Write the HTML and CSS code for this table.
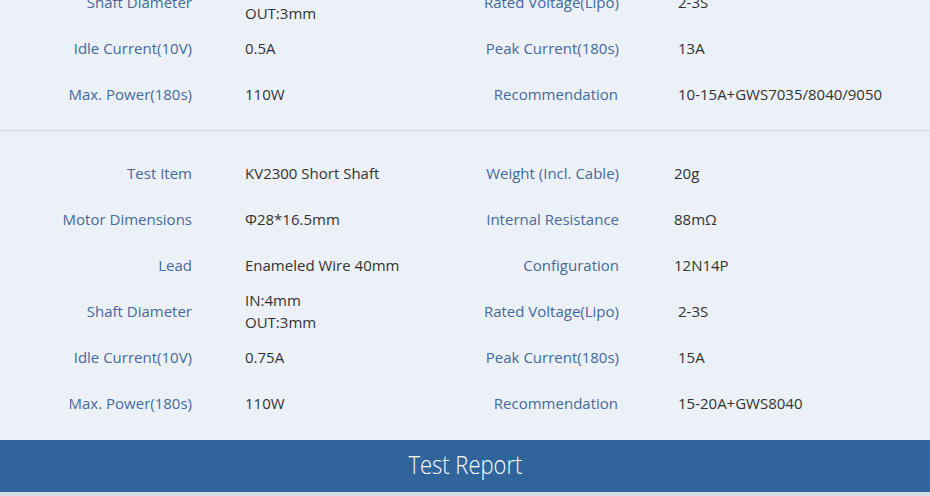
FILE: index.html
```html
<!DOCTYPE html>
<html>
<head>
<meta charset="utf-8">
<link rel="stylesheet" href="styles.css">
</head>
<body>
<div class="page">
  <section class="spec spec-first">
    <div class="row">
      <div class="lbl">Test Item</div><div class="val">KV1800 Short Shaft</div>
      <div class="lbl2">Weight (Incl. Cable)</div><div class="val2 a">20g</div>
    </div>
    <div class="row">
      <div class="lbl">Motor Dimensions</div><div class="val">Φ28*16.5mm</div>
      <div class="lbl2">Internal Resistance</div><div class="val2 a">120mΩ</div>
    </div>
    <div class="row">
      <div class="lbl">Lead</div><div class="val">Enameled Wire 40mm</div>
      <div class="lbl2">Configuration</div><div class="val2 a">12N14P</div>
    </div>
    <div class="row">
      <div class="lbl">Shaft Diameter</div><div class="val">IN:4mm<br>OUT:3mm</div>
      <div class="lbl2">Rated Voltage(Lipo)</div><div class="val2 b">2-3S</div>
    </div>
    <div class="row">
      <div class="lbl">Idle Current(10V)</div><div class="val">0.5A</div>
      <div class="lbl2">Peak Current(180s)</div><div class="val2 b">13A</div>
    </div>
    <div class="row">
      <div class="lbl">Max. Power(180s)</div><div class="val">110W</div>
      <div class="lbl2 rec">Recommendation</div><div class="val2 b">10-15A+GWS7035/8040/9050</div>
    </div>
  </section>
  <section class="spec spec-second">
    <div class="row">
      <div class="lbl">Test Item</div><div class="val">KV2300 Short Shaft</div>
      <div class="lbl2">Weight (Incl. Cable)</div><div class="val2 a">20g</div>
    </div>
    <div class="row">
      <div class="lbl">Motor Dimensions</div><div class="val">Φ28*16.5mm</div>
      <div class="lbl2">Internal Resistance</div><div class="val2 a">88mΩ</div>
    </div>
    <div class="row">
      <div class="lbl">Lead</div><div class="val">Enameled Wire 40mm</div>
      <div class="lbl2">Configuration</div><div class="val2 a">12N14P</div>
    </div>
    <div class="row">
      <div class="lbl">Shaft Diameter</div><div class="val">IN:4mm<br>OUT:3mm</div>
      <div class="lbl2">Rated Voltage(Lipo)</div><div class="val2 b">2-3S</div>
    </div>
    <div class="row">
      <div class="lbl">Idle Current(10V)</div><div class="val">0.75A</div>
      <div class="lbl2">Peak Current(180s)</div><div class="val2 b">15A</div>
    </div>
    <div class="row">
      <div class="lbl">Max. Power(180s)</div><div class="val">110W</div>
      <div class="lbl2 rec">Recommendation</div><div class="val2 b">15-20A+GWS8040</div>
    </div>
  </section>
  <div class="bar"><h2 class="bar-title">Test Report</h2></div>
  <div class="strip"></div>
</div>
</body>
</html>
```

FILE: styles.css
```css
html, body {
  margin: 0;
  padding: 0;
  background: #ecf1f8;
  overflow: hidden;
}
.page {
  width: 930px;
  height: 496px;
  overflow: hidden;
  font-family: "Open Sans", "Liberation Sans", sans-serif;
  font-size: 15px;
}
.spec {
  display: flex;
  flex-direction: column;
}
.spec-first {
  margin-top: -179px;
  padding: 20px 0 13px;
  border-bottom: 1px solid #d3d9e1;
}
.spec-second {
  padding: 19px 0 14px;
}
.row {
  height: 46px;
  display: grid;
  grid-template-columns: 192px 53px 231px 143px 55px 1fr;
  align-items: center;
  line-height: 22px;
}
.lbl {
  grid-column: 1;
  text-align: right;
  color: #45699b;
  white-space: nowrap;
}
.val {
  grid-column: 3;
  color: #333;
  white-space: nowrap;
}
.lbl2 {
  grid-column: 4;
  text-align: right;
  color: #45699b;
  white-space: nowrap;
}
.lbl2.rec {
  padding-right: 1px;
}
.val2 {
  grid-column: 6;
  color: #333;
  white-space: nowrap;
}
.val2.b { padding-left: 4px; }
.bar {
  height: 52px;
  box-sizing: border-box;
  padding-bottom: 4px;
  background: #31649a;
  display: flex;
  align-items: center;
  justify-content: center;
}
.bar-title {
  margin: 0;
  color: #fff;
  font-weight: 300;
  font-size: 26px;
  transform: scaleX(0.845);
}
.strip {
  height: 4px;
  background: #d6dee5;
}
```
